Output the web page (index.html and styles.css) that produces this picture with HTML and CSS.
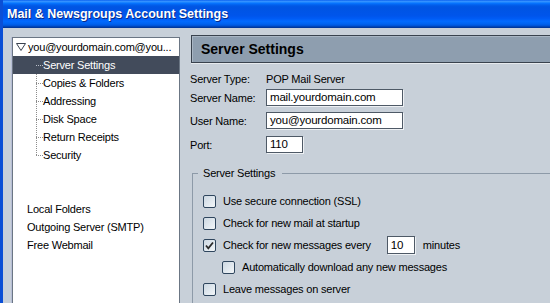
FILE: index.html
```html
<!DOCTYPE html>
<html lang="en">
<head>
  <meta charset="UTF-8">
  <title>Mail &amp; Newsgroups Account Settings</title>
  <link rel="stylesheet" href="styles.css">
</head>
<body>
  <div class="window">
    <div class="titlebar">Mail &amp; Newsgroups Account Settings</div>
    <div class="client">
      <div class="tree">
        <div class="row account">
          <svg class="twisty" width="10" height="8" viewBox="0 0 10 8"><polygon points="0.5,0.5 9.5,0.5 5,7.5" fill="#fff" stroke="#3a4250" stroke-width="1"/></svg>
          <span>you@yourdomain.com@you...</span>
        </div>
        <div class="children">
          <div class="row child selected">Server Settings</div>
          <div class="row child">Copies &amp; Folders</div>
          <div class="row child">Addressing</div>
          <div class="row child">Disk Space</div>
          <div class="row child">Return Receipts</div>
          <div class="row child">Security</div>
        </div>
        <div class="row top first-top">Local Folders</div>
        <div class="row top">Outgoing Server (SMTP)</div>
        <div class="row top">Free Webmail</div>
      </div>
      <div class="pane">
        <div class="pane-header">Server Settings</div>
        <div class="field first">
          <span class="label">Server Type:</span>
          <span>POP Mail Server</span>
        </div>
        <div class="field">
          <span class="label">Server Name:</span>
          <span class="input wide">mail.yourdomain.com</span>
        </div>
        <div class="field gap6">
          <span class="label">User Name:</span>
          <span class="input wide">you@yourdomain.com</span>
        </div>
        <div class="field gap7">
          <span class="label">Port:</span>
          <span class="input port">110</span>
        </div>
        <fieldset class="group">
          <legend>Server Settings</legend>
          <div class="check-row">
            <span class="checkbox"></span>
            <span>Use secure connection (SSL)</span>
          </div>
          <div class="check-row">
            <span class="checkbox"></span>
            <span>Check for new mail at startup</span>
          </div>
          <div class="check-row">
            <span class="checkbox">
              <svg width="11" height="11" viewBox="0 0 11 11"><polyline points="2,5.5 4.3,8.3 9,2.5" fill="none" stroke="#2b2b2b" stroke-width="1.8"/></svg>
            </span>
            <span>Check for new messages every</span>
            <span class="input minutes">10</span>
            <span>minutes</span>
          </div>
          <div class="check-row indent">
            <span class="checkbox"></span>
            <span>Automatically download any new messages</span>
          </div>
          <div class="check-row">
            <span class="checkbox"></span>
            <span>Leave messages on server</span>
          </div>
        </fieldset>
      </div>
    </div>
  </div>
</body>
</html>
```

FILE: styles.css
```css
html, body {
  margin: 0;
  padding: 0;
  overflow: hidden;
}
body {
  width: 550px;
  height: 303px;
  font-family: 'Liberation Sans', Arial, sans-serif;
  font-size: 11px;
  letter-spacing: -0.2px;
  color: #000;
}
.window {
  height: 303px;
  display: flex;
  flex-direction: column;
  background: #c8d0d9;
  border-left: 3px solid #0b4fd6;
  overflow: hidden;
}
.titlebar {
  height: 28px;
  flex: none;
  margin-left: -3px;
  padding-left: 7px;
  line-height: 29px;
  font-size: 12.5px;
  font-weight: bold;
  letter-spacing: 0;
  color: #fff;
  text-shadow: 1px 1px 0 #0a2a86;
  background: linear-gradient(to bottom, #0058ee 0%, #3a93ff 4%, #288eff 7%, #127dff 10%, #036ffc 13%, #0262ee 17%, #0057e5 22%, #0054e3 28%, #0055eb 56%, #005bf5 66%, #026afe 76%, #0062ef 86%, #0052d6 92%, #0040ab 96%, #003092 100%);
}
.client {
  flex: 1;
  display: flex;
  padding-left: 9px;
  min-height: 0;
}

/* account tree */
.tree {
  width: 166px;
  flex: none;
  margin-top: 9px;
  background: #fff;
  border: 1px solid #6b7684;
  border-bottom: none;
  box-shadow: -1px 0 0 #b7bed6;
}
.row {
  height: 18px;
  line-height: 18px;
  white-space: nowrap;
}
.account {
  display: flex;
  align-items: center;
  padding-left: 3px;
}
.twisty {
  margin-right: 2px;
}
.children {
  background: repeating-linear-gradient(to bottom, #8c8c8c 0 1px, transparent 1px 2px) 23px 0 / 1px calc(100% - 9px) no-repeat;
}
.child {
  padding-left: 30px;
  background: repeating-linear-gradient(to right, #8c8c8c 0 1px, transparent 1px 2px) 23px 9px / 7px 1px no-repeat;
}
.child.selected {
  color: #fff;
  background: repeating-linear-gradient(to right, #b8bec8 0 1px, transparent 1px 2px) 23px 9px / 7px 1px no-repeat, #424b5b;
}
.top {
  padding-left: 14px;
}
.first-top {
  margin-top: 36px;
}

/* right pane */
.pane {
  flex: 1;
  margin-left: 10px;
  margin-right: -12px;
  display: flex;
  flex-direction: column;
}
.pane-header {
  flex: none;
  margin-top: 7px;
  margin-left: 1px;
  height: 26px;
  line-height: 27px;
  padding-left: 9px;
  font-size: 14px;
  font-weight: bold;
  letter-spacing: 0;
  background: #8e9eaf;
  border: 1px solid #39424e;
  box-shadow: inset 1px 1px 0 #a9b6c4, 0 1px 0 #e6eaee;
}
.field {
  flex: none;
  display: flex;
  align-items: center;
  margin-top: 2px;
  min-height: 16px;
}
.field.first {
  margin-top: 8px;
}
.field.gap6 {
  margin-top: 6px;
}
.field.gap7 {
  margin-top: 7px;
}
.label {
  width: 76px;
  flex: none;
}
.input {
  display: inline-block;
  box-sizing: border-box;
  height: 17px;
  line-height: 15px;
  padding-left: 3px;
  background: #fff;
  border: 1px solid #4e5966;
  box-shadow: 1px 1px 0 #eef1f4;
  font-size: 11.5px;
}
.input.wide {
  width: 137px;
}
.input.port {
  width: 37px;
}
.input.minutes {
  width: 28px;
  height: 18px;
  line-height: 16px;
  margin-left: 16px;
  margin-right: 8px;
}

/* group box */
.group {
  flex: 1;
  margin: 13px 0 0 2px;
  padding: 10px 0 0 10px;
  border: 1px solid #8d9aa8;
  border-right: none;
  border-bottom: none;
  min-width: 0;
  min-height: 0;
}
.group legend {
  margin-left: -5px;
  padding: 0 7px 0 5px;
  line-height: 14px;
}
.check-row {
  display: flex;
  align-items: center;
  height: 22px;
  white-space: nowrap;
}
.check-row.indent {
  padding-left: 19px;
}
.checkbox {
  width: 11px;
  height: 11px;
  flex: none;
  margin-right: 7px;
  display: flex;
  align-items: center;
  justify-content: center;
  border: 1px solid #2f465e;
  border-radius: 2px;
  background: linear-gradient(135deg, #cdd8e2 0%, #e3eaf0 60%, #f3f6f8 100%);
}
```
